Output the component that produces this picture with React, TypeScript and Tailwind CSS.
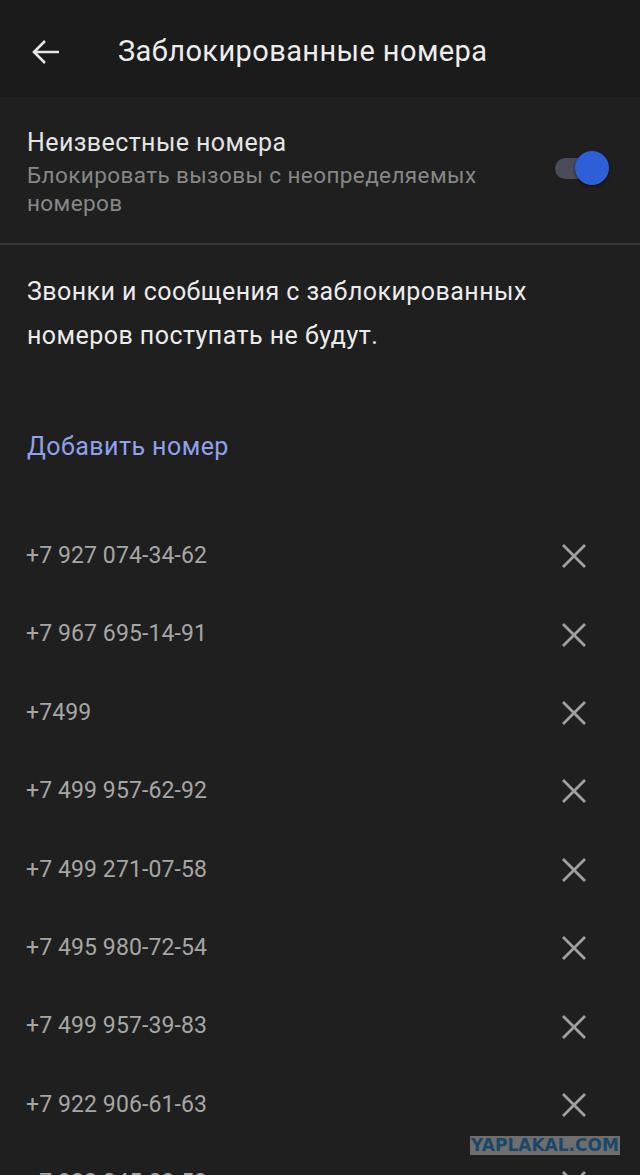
import React from "react";

const numbers = [
  "+7 927 074-34-62",
  "+7 967 695-14-91",
  "+7499",
  "+7 499 957-62-92",
  "+7 499 271-07-58",
  "+7 495 980-72-54",
  "+7 499 957-39-83",
  "+7 922 906-61-63",
  "+7 922 845-83-53",
];

function XIcon() {
  return (
    <svg width="26" height="26" viewBox="0 0 26 26" fill="none">
      <path d="M2 2L24 24M24 2L2 24" stroke="#a0a0a0" strokeWidth="2.8" strokeLinecap="butt" />
    </svg>
  );
}

export default function App() {
  return (
    <div
      className="relative w-[640px] h-[1175px] overflow-hidden bg-[#1f1f1f]"
      style={{ fontFamily: "Roboto, 'Noto Sans', sans-serif" }}
    >
      <header className="h-[97px] bg-[#1b1b1b] flex items-center pt-[7px] border-b border-[#191919]">
        <div className="w-[118px] pl-[32px] flex items-center">
          <svg width="28" height="26" viewBox="0 0 28 26" fill="none">
            <path d="M27 13H3M13 2L2 13L13 24" stroke="#e6e6e6" strokeWidth="2.6" strokeLinejoin="miter" />
          </svg>
        </div>
        <h1 className="text-[29px] tracking-[0.4px] text-[#ededed] leading-none">Заблокированные номера</h1>
      </header>

      <section className="h-[148px] flex items-start pl-[27px] pr-[31px] pt-[29px] border-b-2 border-[#363636]">
        <div className="flex-1">
          <div className="text-[25px] tracking-[0.4px] leading-[34px] text-[#e4e4e4]">Неизвестные номера</div>
          <div className="text-[22.5px] tracking-[0.4px] leading-[28px] text-[#878787] mt-[1px] w-[500px]">
            Блокировать вызовы с неопределяемых
            <br />
            номеров
          </div>
        </div>
        <div className="relative w-[54px] h-[34px] mt-[25px]">
          <div className="absolute left-0 top-[7px] w-[42px] h-[21px] rounded-full bg-[#4a4c59]" />
          <div className="absolute right-0 top-0 w-[34px] h-[34px] rounded-full bg-[#2f5fd6] shadow-[0_1px_3px_rgba(0,0,0,0.6)]" />
        </div>
      </section>

      <p className="pl-[27px] pt-[25px] text-[25px] tracking-[0.45px] leading-[44px] text-[#ececec]">
        Звонки и сообщения с заблокированных
        <br />
        номеров поступать не будут.
      </p>

      <div className="pl-[27px] mt-[67px] h-[44px] flex items-center text-[25px] tracking-[0.45px] text-[#8fa2ea]">
        Добавить номер
      </div>

      <ul className="mt-[48px]">
        {numbers.map((n) => (
          <li key={n} className="h-[78.4px] flex items-center justify-between pl-[26px] pr-[53px]">
            <span className="text-[23px] tracking-[0.1px] text-[#a6a6a6]">{n}</span>
            <XIcon />
          </li>
        ))}
      </ul>

      <div className="absolute left-[470px] top-[1136px] w-[150px] h-[19px] bg-[#6e6e6e] flex items-center justify-center">
        <span
          className="text-[17px] font-black tracking-[0px] text-[#1b4768] leading-none"
          style={{ fontFamily: "'DejaVu Sans', sans-serif" }}
        >
          YAPLAKAL.COM
        </span>
      </div>
    </div>
  );
}
